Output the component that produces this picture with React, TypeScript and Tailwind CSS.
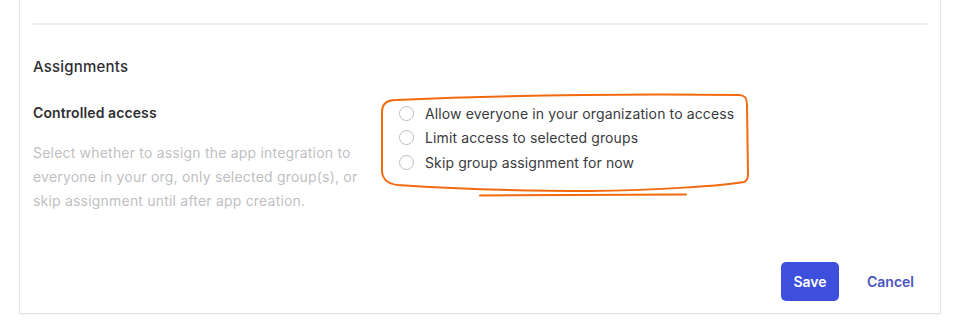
import React from 'react';

const options = [
  'Allow everyone in your organization to access',
  'Limit access to selected groups',
  'Skip group assignment for now',
];

function Annotation() {
  // hand-drawn orange highlight around the radio group
  return (
    <svg
      className="pointer-events-none absolute left-0 top-0"
      width={955}
      height={329}
      viewBox="0 0 955 329"
      fill="none"
    >
      <path
        d="M 396 100 Q 560 93 739 95 C 745 95 747 98 747 105 L 748 174 C 748 179 747 181 744 182 C 720 186 660 190 590 191 C 520 191 440 188 398 185 C 388 184 383 180 382 172 L 382 112 C 382 104 386 100 396 100 Z"
        stroke="#f26a10"
        strokeWidth={2}
        strokeLinecap="round"
        strokeLinejoin="round"
      />
      <path d="M 480 195.5 L 686 194.5" stroke="#f26a10" strokeWidth={2} strokeLinecap="round" />
    </svg>
  );
}

export default function App() {
  return (
    <div className="relative h-[329px] w-[955px] overflow-hidden bg-white font-['Inter',sans-serif]">
      <div className="ml-[19px] flex h-[314px] w-[922px] flex-col border-x border-b border-[#e2e2e4] px-[13px] shadow-[0_1px_2px_rgba(0,0,0,0.04)]">
        <div className="mt-[23px] h-[2px] bg-[#ececee]" />

        <h2 className="mt-[32px] text-[15px] leading-[20px] font-medium tracking-[0.2px] text-[#2f2f33]">
          Assignments
        </h2>

        <div className="mt-[24px] flex">
          <div className="w-[366px]">
            <p className="text-[14px] leading-[24px] font-semibold tracking-[0.1px] text-[#2f2f33]">
              Controlled access
            </p>
            <p className="mt-[16px] w-[335px] text-[14px] leading-[24px] tracking-[0.2px] text-[#bfbfc3]">
              Select whether to assign the app integration to everyone in your org, only selected group(s), or skip
              assignment until after app creation.
            </p>
          </div>

          <div className="flex flex-col">
            {options.map((label) => (
              <label key={label} className="flex h-[24.5px] items-center gap-[11px]">
                <span className="h-[15px] w-[15px] rounded-full border-[1.5px] border-[#bdbdc1] bg-white" />
                <span className="text-[14px] tracking-[0.12px] text-[#3a3a3e]">{label}</span>
              </label>
            ))}
          </div>
        </div>

        <div className="mt-auto mb-[12px] flex items-center justify-end">
          <button className="h-[39px] w-[58px] rounded-[5px] bg-[#3d4fdc] text-[14px] font-semibold text-white">
            Save
          </button>
          <button className="ml-[28px] mr-[13px] text-[14px] font-semibold text-[#4b56bf]">Cancel</button>
        </div>
      </div>

      <Annotation />
    </div>
  );
}
